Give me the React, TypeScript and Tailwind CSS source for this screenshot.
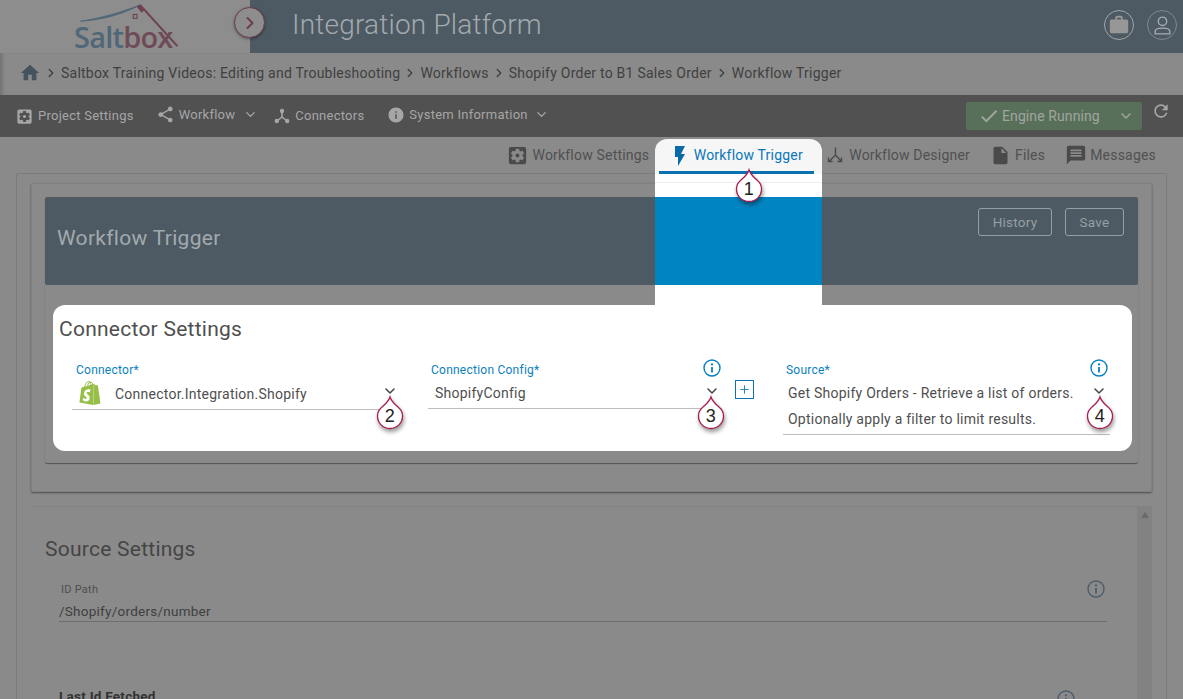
import { ChevronDown, ChevronRight, Plus } from "lucide-react";
import {
  MdCheck,
  MdFlashOn,
  MdHome,
  MdInfo,
  MdInsertDriveFile,
  MdMessage,
  MdRefresh,
  MdSettingsApplications,
  MdShare,
  MdWork,
} from "react-icons/md";
import { SiShopify } from "react-icons/si";

function TreeIcon({ className }: { className?: string }) {
  return (
    <svg viewBox="0 0 16 16" className={className} fill="none" stroke="currentColor" strokeWidth="1.6">
      <path d="M8 4v5M8 9l-5 4M8 9l5 4" />
      <circle cx="8" cy="3" r="2.2" fill="currentColor" stroke="none" />
      <circle cx="2.8" cy="13" r="2.2" fill="currentColor" stroke="none" />
      <circle cx="13.2" cy="13" r="2.2" fill="currentColor" stroke="none" />
    </svg>
  );
}

function DesignerIcon({ className }: { className?: string }) {
  return (
    <svg viewBox="0 0 16 16" className={className} fill="none" stroke="currentColor" strokeWidth="1.4">
      <path d="M8.500 0.500V8L2 14.500M8.500 8L14.500 14.500M1.500 10.500v4h4M14.500 10.500v4h-4" />
    </svg>
  );
}

function InfoCircle({ className }: { className?: string }) {
  return (
    <svg viewBox="0 0 18 18" className={className} fill="none" stroke="currentColor">
      <circle cx="9" cy="9" r="8" strokeWidth="1.4" />
      <circle cx="9" cy="5.4" r="1.1" fill="currentColor" stroke="none" />
      <path d="M9 8v5.4" strokeWidth="1.8" />
    </svg>
  );
}

function Pin({ n, className }: { n: number; className: string }) {
  return (
    <div className={`absolute w-[30px] h-[36px] ${className}`}>
      <svg viewBox="0 0 30 36" className="absolute inset-0 w-full h-full overflow-visible drop-shadow-[1px_3px_2px_rgba(0,0,0,0.4)]">
        <path
          d="M15 1C16.5 6 20 8 23.5 11.5C26.5 14 27.5 17 27.5 20C27.5 27 22 32.5 15 32.5C8 32.5 2.5 27 2.5 20C2.5 17 3.5 14 6.5 11.5C10 8 13.5 6 15 1Z"
          fill="#fff"
          stroke="#a81c52"
          strokeWidth="1.3"
        />
      </svg>
      <span className="absolute left-0 right-0 top-[9px] text-center font-['Liberation_Sans',sans-serif] text-[18px] leading-[22px] text-[#222]">
        {n}
      </span>
    </div>
  );
}

function Crumb({ label }: { label: string }) {
  return (
    <>
      <ChevronRight className="w-[14px] h-[14px] mx-[3px] text-[#3f3f3f]" strokeWidth={2.4} />
      <span>{label}</span>
    </>
  );
}

function Tab({ icon, label, className }: { icon: React.ReactNode; label: string; className: string }) {
  return (
    <div className={`flex items-center ${className}`}>
      {icon}
      <span>{label}</span>
    </div>
  );
}

export default function App() {
  return (
    <div className="relative w-[1183px] h-[699px] overflow-hidden bg-[#8a8a8a] font-['Roboto',sans-serif] text-[#3f3f3f] tracking-[0.25px]">
      {/* Header */}
      <header className="flex h-[53px] bg-[#8d8d8d]">
        <div className="relative w-[250px] shrink-0">
          <svg viewBox="0 0 120 50" className="absolute left-[70px] top-[2px] w-[115px] h-[48px]" fill="none">
            <path d="M11 20C30 17 50 12 73 3C55 13 32 19 11 20Z" fill="#4e6677" stroke="#4e6677" strokeWidth="0.8" />
            <path d="M73 3L112 46" stroke="#6f4250" strokeWidth="2.2" />
            <path d="M71 4L76 10" stroke="#6f4250" strokeWidth="3.400" />
            <rect x="66" y="13" width="4" height="4" stroke="#6f4250" strokeWidth="1.2" />
          </svg>
          <span className="absolute left-[74px] top-[19px] font-['Open_Sans',sans-serif] font-semibold text-[29px] leading-[36px] tracking-[-0.8px]">
            <span className="text-[#4f6778]">Salt</span>
            <span className="text-[#6f4b58]">box</span>
          </span>
          <div className="absolute left-[234px] top-[7px] z-10 flex items-center justify-center w-[31px] h-[31px] rounded-full bg-[#8d8d8d] border border-[#6f3c4c] shadow-[0_1px_3px_rgba(0,0,0,0.4)]">
            <ChevronRight className="w-[20px] h-[20px] text-[#6f3c4c]" strokeWidth={2.4} />
          </div>
        </div>
        <div className="flex flex-1 items-center justify-between bg-[#4d5a63] pl-[42px] pr-[6px]">
          <h1 className="-mt-[3px] text-[28px] font-light text-[#a3a9ae] tracking-[0.2px]">Integration Platform</h1>
          <div className="flex items-center gap-[13px] -mt-[3px]">
            <div className="flex items-center justify-center w-[30px] h-[30px] rounded-full border border-[#a0a5a9]">
              <MdWork className="w-[22px] h-[22px] text-[#979797]" />
            </div>
            <div className="flex items-center justify-center w-[30px] h-[30px] rounded-full border border-[#7f8890]">
              <svg viewBox="0 0 20 20" className="w-[21px] h-[21px] text-[#a6abb0]" fill="none" stroke="currentColor" strokeWidth="1.3">
                <circle cx="10" cy="6" r="4" />
                <path d="M3 18v-2.500C3 13.500 5 12.500 10 12.500s7 1 7 3V18Z" />
              </svg>
            </div>
          </div>
        </div>
      </header>

      {/* Breadcrumb */}
      <nav className="flex items-center h-[42px] pl-[19px] pb-[2px] text-[14px] text-[#404040] tracking-[0.24px] shadow-[inset_5px_0_4px_-3px_rgba(0,0,0,0.2)]">
        <MdHome className="w-[22px] h-[22px] text-[#45535e]" />
        <Crumb label="Saltbox Training Videos: Editing and Troubleshooting" />
        <Crumb label="Workflows" />
        <Crumb label="Shopify Order to B1 Sales Order" />
        <Crumb label="Workflow Trigger" />
      </nav>

      {/* Menu bar */}
      <div className="flex items-center h-[42px] bg-[#515151] pl-[15px] pr-[12px] text-[13px] text-[#a6a6a6]">
        <MdSettingsApplications className="w-[19px] h-[19px] mr-[4px]" />
        <span className="mr-[22px] mb-[1px]">Project Settings</span>
        <MdShare className="w-[19px] h-[19px] mr-[4px] mb-[3px]" />
        <span className="mb-[3px]">Workflow</span>
        <ChevronDown className="w-[15px] h-[15px] ml-[8px] mr-[16px] mb-[3px]" strokeWidth={2.2} />
        <TreeIcon className="w-[16px] h-[16px] mr-[5px]" />
        <span className="mr-[23px] mb-[1px]">Connectors</span>
        <MdInfo className="w-[18px] h-[18px] mr-[4px] mb-[2px]" />
        <span className="mb-[3px]">System Information</span>
        <ChevronDown className="w-[15px] h-[15px] ml-[6px] mb-[3px]" strokeWidth={2.2} />
        <div className="flex items-center ml-auto h-[28px] w-[176px] rounded-[2px] bg-[#58705a] pl-[12px] pr-[8px] text-[14px] text-[#a0a69f] tracking-[0.1px]">
          <MdCheck className="w-[22px] h-[22px] mr-[2px]" />
          <span>Engine Running</span>
          <ChevronDown className="w-[16px] h-[16px] ml-auto" strokeWidth={2.2} />
        </div>
        <MdRefresh className="w-[20px] h-[20px] ml-[9px] -mt-[10px]" />
      </div>

      {/* Tabs */}
      <div className="flex justify-end h-[36px] pr-[27px] text-[14px] text-[#505050] tracking-[0.2px]">
        <Tab className="mr-[6px]" icon={<MdSettingsApplications className="w-[23px] h-[23px] mr-[3px] text-[#4a4a4a]" />} label="Workflow Settings" />
        <div className="relative z-20 flex items-center justify-center mt-[2px] w-[167px] h-[35px] rounded-t-[12px] bg-[#f6f6f6] pb-[2px] pr-[7px] text-[#0b76b8]">
          <MdFlashOn className="w-[24px] h-[24px] mr-[2px] text-[#0a6aa8]" />
          <span>Workflow Trigger</span>
          <div className="absolute left-[4px] bottom-0 w-[155px] h-[3px] bg-[#0a72b0]" />
        </div>
        <Tab className="ml-[5px] mr-[20px]" icon={<DesignerIcon className="w-[16px] h-[16px] mr-[6px] text-[#4a4a4a]" />} label="Workflow Designer" />
        <Tab className="mr-[20px]" icon={<MdInsertDriveFile className="w-[21px] h-[21px] mr-[4px] text-[#4a4a4a]" />} label="Files" />
        <Tab className="" icon={<MdMessage className="w-[22px] h-[22px] mr-[3px] text-[#4a4a4a]" />} label="Messages" />
      </div>

      {/* Dimmed page */}
      <main className="mx-[16px] w-[1151px] h-[530px] border border-[#7b7b7b] rounded-[2px] px-[14px] pt-[9px]">
        <section className="h-[309px] border border-[#808080] rounded-[2px] shadow-[0_1px_2px_rgba(0,0,0,0.45)] px-[13px] pt-[13px]">
          <div className="h-[266px] rounded-[2px] shadow-[0_1px_1px_rgba(0,0,0,0.4)]">
            <div className="flex items-center justify-between h-[88px] bg-[#4d5a63] pl-[12px] pr-[14px] rounded-[2px]">
              <h2 className="-mt-[4px] text-[21px] text-[#a3a9ae] tracking-[0.3px]">Workflow Trigger</h2>
              <div className="flex items-start gap-[13px] -mt-[38px]">
                <span className="flex items-center justify-center w-[74px] h-[28px] rounded-[3px] border border-[#979ea4] text-[13.5px] text-[#979ea4]">History</span>
                <span className="flex items-center justify-center w-[59px] h-[28px] rounded-[3px] border border-[#979ea4] text-[13.5px] text-[#979ea4]">Save</span>
              </div>
            </div>
          </div>
        </section>

        <section className="flex mt-[14px] h-[220px] border-t border-[#828282]">
          <div className="flex-1 pl-[14px] pt-[28px]">
            <h2 className="text-[21px] leading-[28px] text-[#454545] tracking-[0.25px]">Source Settings</h2>
            <div className="relative mt-[20px] ml-[14px] w-[1048px] h-[39px] border-b border-[#6e6e6e]">
              <div className="pl-[2px] text-[11px] leading-[14px] text-[#4f4f4f]">ID Path</div>
              <div className="mt-[5px] text-[13.5px] leading-[18px] text-[#3f3f3f]">/Shopify/orders/number</div>
              <InfoCircle className="absolute right-[2px] top-[-3px] w-[18px] h-[18px] text-[#4d5d6a]" />
            </div>
            <div className="relative mt-[65px] ml-[14px] w-[1018px] text-[13.5px] font-bold leading-[18px] text-[#333]">
              Last Id Fetched
              <InfoCircle className="absolute right-[2px] top-[3px] w-[18px] h-[18px] text-[#4d5d6a]" />
            </div>
          </div>
          <div className="w-[15px] bg-[#828282] flex justify-center pt-[5px]">
            <div className="w-0 h-0 border-x-[4px] border-x-transparent border-b-[6px] border-b-[#6a6a6a]" />
          </div>
        </section>
      </main>

      {/* Spotlight under the active tab */}
      <div className="absolute left-[655px] top-[174px] z-10 w-[167px]">
        <div className="h-[23px] bg-white pt-[8px]">
          <div className="border-t border-[#eeeeee]" />
        </div>
        <div className="h-[88px] bg-[#0085c3]" />
        <div className="h-[20px] bg-white" />
      </div>

      {/* Spotlight: connector settings */}
      <div className="absolute left-[53px] top-[305px] z-10 w-[1079px] h-[146px] rounded-[12px] bg-white text-[#4f4f4f] tracking-[0.24px]">
        <h2 className="absolute left-[6px] top-[10px] text-[21px] leading-[28px] tracking-[0.25px]">Connector Settings</h2>
        <div className="flex pl-[19px] pt-[58px]">
          <div className="relative w-[328px] h-[47px] border-b border-[#bdbdbd]">
            <div className="pl-[4px] text-[12px] leading-[14px] text-[#0a7fc0]">Connector*</div>
            <div className="flex items-center mt-[3px]">
              <SiShopify className="w-[24px] h-[26px] ml-[6px] text-[#95bf47]" />
              <span className="ml-[13px] text-[14px] leading-[20px] translate-y-[1px]">Connector.Integration.Shopify</span>
            </div>
            <ChevronDown className="absolute right-[2px] top-[20px] w-[16px] h-[16px] text-[#4a4a4a]" strokeWidth={2.4} />
          </div>
          <div className="relative ml-[28px] w-[294px] h-[46px] border-b border-[#bdbdbd]">
            <div className="pl-[3px] text-[12px] leading-[14px] text-[#0a7fc0]">Connection Config*</div>
            <div className="mt-[6px] pl-[7px] text-[14px] leading-[20px]">ShopifyConfig</div>
            <InfoCircle className="absolute right-[1px] top-[-4px] w-[18px] h-[18px] text-[#0a7fc0]" />
            <ChevronDown className="absolute right-[2px] top-[20px] w-[16px] h-[16px] text-[#4a4a4a]" strokeWidth={2.4} />
          </div>
          <div className="flex items-center justify-center self-start mt-[17px] ml-[13px] w-[19px] h-[19px] border border-[#0a72b0]">
            <Plus className="w-[13px] h-[13px] text-[#0a72b0]" strokeWidth={1.6} />
          </div>
          <div className="relative ml-[29px] w-[327px] h-[72px] border-b border-[#bdbdbd]">
            <div className="pl-[3px] text-[12px] leading-[14px] text-[#0a7fc0]">Source*</div>
            <div className="mt-[3px] pl-[5px] text-[14px] leading-[26px]">
              Get Shopify Orders - Retrieve a list of orders.
              <br />
              Optionally apply a filter to limit results.
            </div>
            <InfoCircle className="absolute right-[2px] top-[-4px] w-[18px] h-[18px] text-[#0a7fc0]" />
            <ChevronDown className="absolute right-[3px] top-[20px] w-[16px] h-[16px] text-[#4a4a4a]" strokeWidth={2.4} />
          </div>
        </div>
      </div>

      <Pin n={1} className="z-30 left-[734px] top-[169px]" />
      <Pin n={2} className="z-30 left-[375px] top-[396px]" />
      <Pin n={3} className="z-30 left-[696px] top-[396px]" />
      <Pin n={4} className="z-30 left-[1085px] top-[396px]" />
    </div>
  );
}
